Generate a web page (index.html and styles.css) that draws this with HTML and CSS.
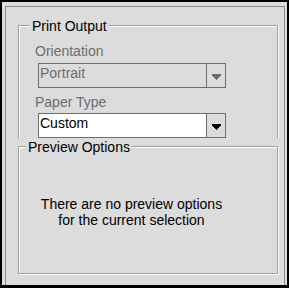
FILE: index.html
```html
<!DOCTYPE html>
<html>
<head>
<meta charset="utf-8">
<link rel="stylesheet" href="styles.css">
</head>
<body>
<div class="window">
  <div class="frame">
    <div class="group group-print">
      <span class="group-title title-print">Print Output</span>
      <span class="label label-orient">Orientation</span>
      <div class="combo combo-disabled">
        <span class="combo-field">Portrait</span>
        <span class="combo-btn"><svg class="arrow" width="9" height="6" viewBox="0 0 9 6" shape-rendering="crispEdges"><rect x="0" y="0" width="9" height="2"/><rect x="1" y="2" width="7" height="1"/><rect x="2" y="3" width="5" height="1"/><rect x="3" y="4" width="3" height="1"/><rect x="4" y="5" width="1" height="1"/></svg></span>
      </div>
      <span class="label label-paper">Paper Type</span>
      <div class="combo combo-active">
        <span class="combo-field">Custom</span>
        <span class="combo-btn"><svg class="arrow" width="9" height="6" viewBox="0 0 9 6" shape-rendering="crispEdges"><rect x="0" y="0" width="9" height="2"/><rect x="1" y="2" width="7" height="1"/><rect x="2" y="3" width="5" height="1"/><rect x="3" y="4" width="3" height="1"/><rect x="4" y="5" width="1" height="1"/></svg></span>
      </div>
    </div>
    <div class="group group-preview">
      <span class="group-title title-preview">Preview Options</span>
      <p class="message">There are no preview options<br>for the current selection</p>
    </div>
  </div>
</div>
</body>
</html>
```
FILE: styles.css
```css
html, body {
  margin: 0;
  padding: 0;
}
body {
  width: 289px;
  height: 288px;
  background: #dcdcdc;
  font-family: "Liberation Sans", Arial, sans-serif;
  font-size: 14px;
  line-height: 16px;
  color: #000;
}
.window {
  box-sizing: border-box;
  width: 289px;
  height: 288px;
  border-style: solid;
  border-color: #000;
  border-width: 2px 2px 3px 2px;
  padding: 4px 2px 0 3px;
  display: flex;
}
.frame {
  flex: 1;
  border: 1px solid #8c8c8c;
  border-bottom: none;
  padding: 0 6px 0 12px;
  display: flex;
  flex-direction: column;
}
.group {
  box-sizing: border-box;
  border: 1px solid #a0a0a0;
  display: flex;
  flex-direction: column;
  align-items: flex-start;
}
.group-print {
  margin-top: 18px;
  border-bottom: none;
  box-shadow: inset 1px 1px 0 #fff, 1px 0 0 #fff;
}
.group-preview {
  margin-top: 8px;
  height: 128px;
  box-shadow: inset 1px 1px 0 #fff, 1px 1px 0 #fff;
}
.group-title {
  background: #dcdcdc;
  padding: 0 2px;
  margin-top: -8px;
  color: #000;
}
.title-print {
  margin-left: 11px;
}
.title-preview {
  margin-left: 7px;
}
.label {
  color: #6d6d6d;
  margin-left: 16px;
}
.label-orient {
  margin-top: 9px;
}
.label-paper {
  margin-top: 6px;
}
.combo {
  box-sizing: border-box;
  width: 188px;
  height: 25px;
  margin-left: 19px;
  border: 1px solid #6d6d6d;
  display: flex;
}
.combo-disabled {
  margin-top: 4px;
}
.combo-active {
  margin-top: 3px;
}
.combo-field {
  flex: 1;
  padding: 1px 0 0 1px;
  line-height: 16px;
}
.combo-disabled .combo-field {
  color: #6d6d6d;
}
.combo-active .combo-field {
  background: #fff;
  color: #000;
}
.combo-btn {
  box-sizing: border-box;
  width: 19px;
  border-left: 1px solid #6d6d6d;
  background: #dcdcdc;
  padding: 10px 0 0 5px;
  display: flex;
  align-items: flex-start;
}
.arrow {
  display: block;
}
.combo-disabled .arrow {
  fill: #6d6d6d;
}
.combo-active .arrow {
  fill: #000;
}
.message {
  margin: 41px 0 0 12px;
  width: 201px;
  text-align: center;
  color: #000;
}
```
